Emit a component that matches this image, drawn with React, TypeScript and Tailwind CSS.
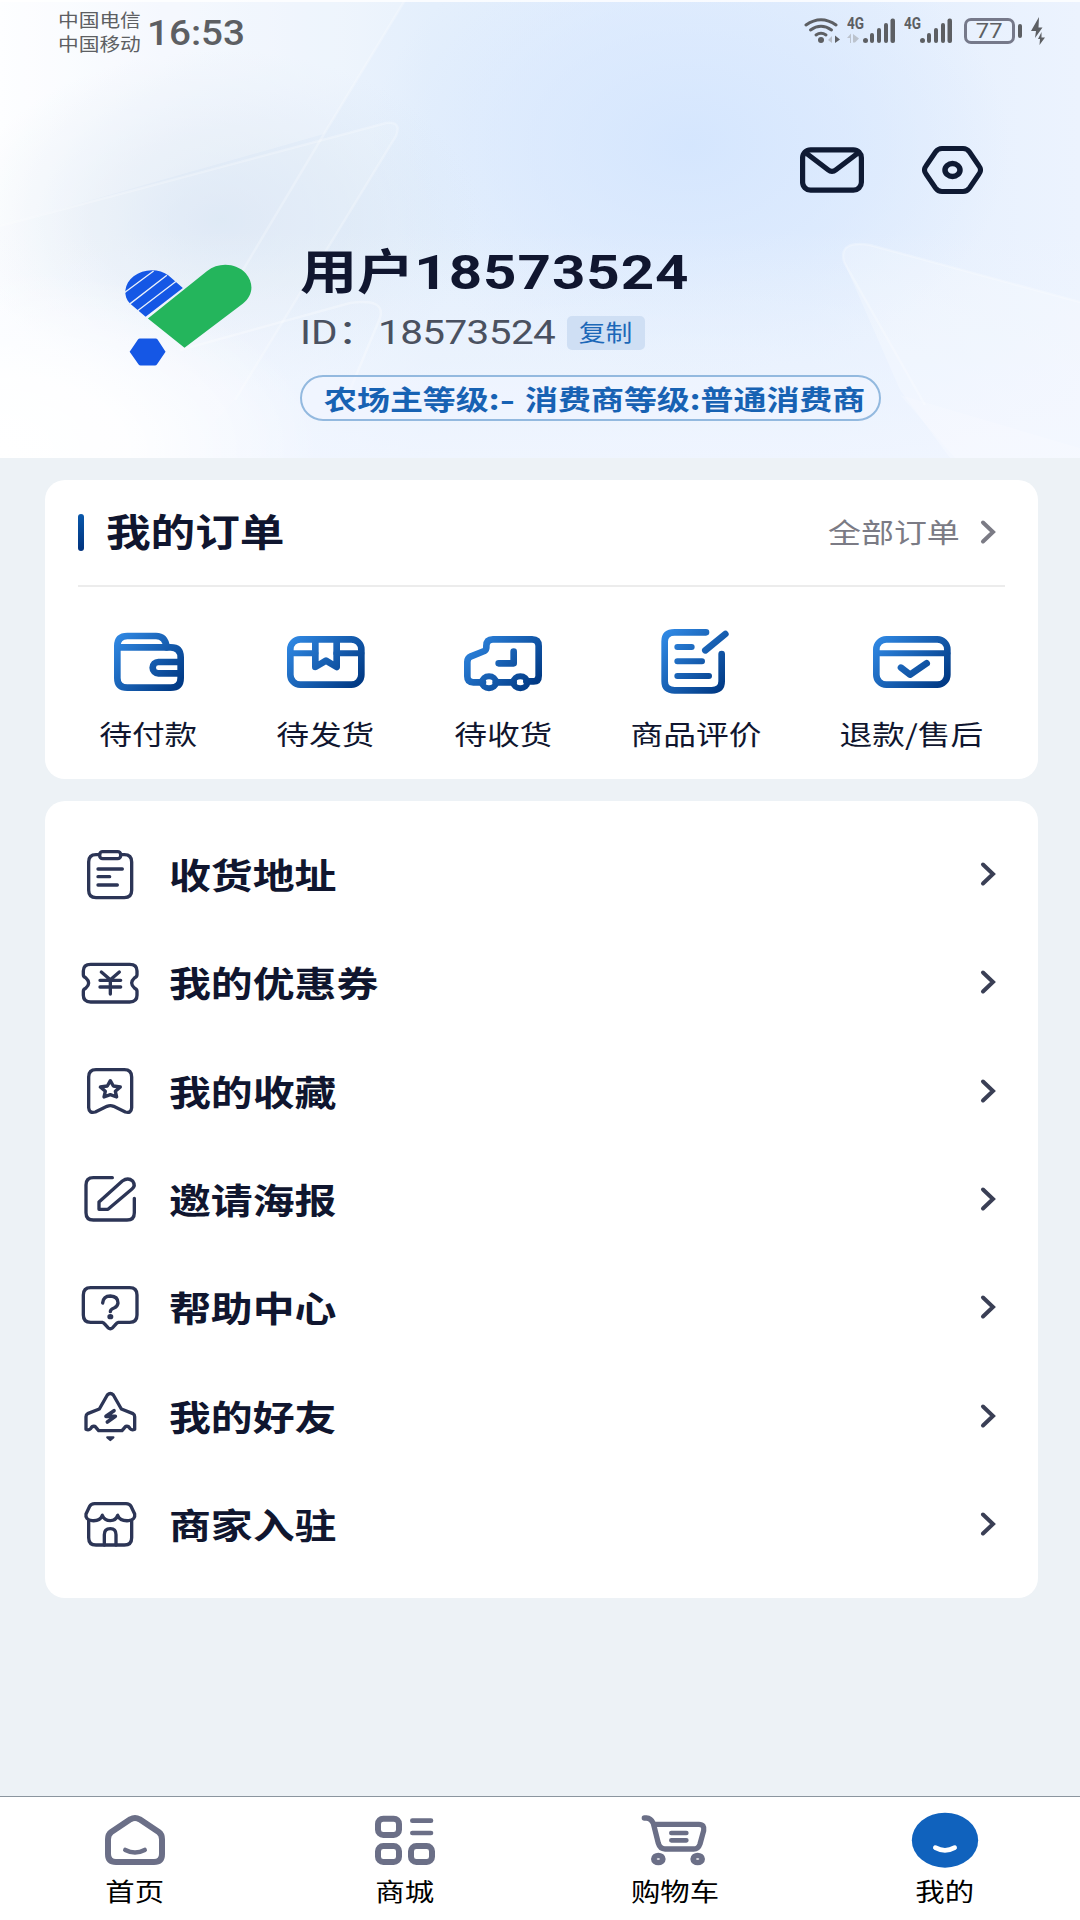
/**
 * ProfilePage — the "我的" tab of the mall app.
 *
 * Header with account info, order shortcuts, a menu list and the bottom tab
 * bar. The whole UI is drawn with wide letterforms, so text goes through
 * <Wide>, which stretches it horizontally.
 */
import type { ReactNode } from 'react'
import clsx from 'clsx'

interface WideProps {
  className?: string
  center?: boolean
  children: ReactNode
}

function Wide({ className, center = false, children }: WideProps) {
  return (
    <span
      className={clsx(
        'inline-block scale-x-[1.19] whitespace-nowrap',
        center ? 'origin-center' : 'origin-left',
        className
      )}
    >
      {children}
    </span>
  )
}

export default function App() {
  return (
    <div className="flex h-[1920px] w-[1080px] flex-col overflow-hidden bg-[#edf2f6] font-['Noto_Sans_CJK_SC',sans-serif] text-[#10162f]">
      <Header />
      <OrdersCard />
      <MenuCard />
      <TabBar />
    </div>
  )
}

/* ---------- header ---------- */

function Header() {
  return (
    <header className="relative h-[458px] shrink-0 overflow-hidden bg-[#eef5fe]">
      <HeaderBackdrop />
      <div className="relative">
        <StatusBar />

        <div className="mt-[76px] flex h-[60px] items-center justify-end gap-[58px] pr-[97px]">
          <svg width="64" height="46" viewBox="0 0 64 46" fill="none" stroke="#0f1a33" strokeWidth="5.2">
            <rect x="2.6" y="2.8" width="58.8" height="40.4" rx="8" />
            <path d="M6 6 L28 22.8 Q32 26 36 22.8 L58 6" />
          </svg>
          <svg width="61" height="48" viewBox="0 0 61 48" fill="none" stroke="#0f1a33" strokeWidth="5">
            <path d="M20 2.5 H41 Q45 2.5 47.5 6 L57 20 Q60 24 57 28 L47.5 42 Q45 45.5 41 45.5 H20 Q16 45.5 13.5 42 L4 28 Q1 24 4 20 L13.5 6 Q16 2.5 20 2.5 Z" />
            <ellipse cx="30.5" cy="24" rx="7.5" ry="6.4" strokeWidth="5.5" />
          </svg>
        </div>

        <div className="mt-10 flex pl-[122px]">
          <Logo />
          <div className="ml-[45px]">
            <div className="h-[62px] text-[48px] leading-[56px] font-bold">
              <Wide>
                用户<span className="font-['Roboto'] text-[49px] tracking-[0.8px]">18573524</span>
              </Wide>
            </div>
            <div className="mt-1.5 flex h-[50px] items-center">
              <div className="w-[267px] pb-[2px] font-['Roboto','Noto_Sans_CJK_SC',sans-serif] text-[34px] leading-[50px] text-[#4a5160]">
                <Wide>
                  ID：<span className="tracking-[-0.5px]">18573524</span>
                </Wide>
              </div>
              <button
                type="button"
                className="flex h-[34px] w-[78px] items-center justify-center rounded-[5px] bg-[#cfdff4] pb-[3px] text-[22.5px] leading-[31px] text-[#1c68b8]"
              >
                <Wide center>复制</Wide>
              </button>
            </div>
            <div className="mt-[17px] flex h-[46px] w-[581px] items-center rounded-full border-2 border-[#93b9df] bg-[#f1f6ff]/50 pl-[22px] text-[27.7px] leading-[42px] font-bold text-[#1762b3]">
              <Wide>
                农场主等级:<span className="mr-[3px] ml-[2px] inline-block scale-x-125">-</span> 消费商等级:普通消费商
              </Wide>
            </div>
          </div>
        </div>
      </div>
    </header>
  )
}

// Soft glow plus a few translucent glass triangles.
function HeaderBackdrop() {
  return (
    <svg className="absolute inset-0" width="1080" height="458" viewBox="0 0 1080 458" fill="none">
      <defs>
        <linearGradient id="base" x1="0" y1="0" x2="1080" y2="0" gradientUnits="userSpaceOnUse">
          <stop offset="0" stopColor="#fdfeff" />
          <stop offset="0.15" stopColor="#f3f7fe" />
          <stop offset="0.4" stopColor="#e4effc" />
          <stop offset="0.75" stopColor="#e3eefd" />
          <stop offset="1" stopColor="#ecf3fe" />
        </linearGradient>
        <radialGradient id="glow" cx="0" cy="0" r="1" gradientUnits="userSpaceOnUse" gradientTransform="translate(690 145) scale(320 230)">
          <stop offset="0" stopColor="#d3e5fe" stopOpacity="0.9" />
          <stop offset="0.5" stopColor="#d7e7fe" stopOpacity="0.6" />
          <stop offset="1" stopColor="#d7e7fe" stopOpacity="0" />
        </radialGradient>
        <radialGradient id="mist" cx="0" cy="0" r="1" gradientUnits="userSpaceOnUse" gradientTransform="translate(220 220) scale(260 170)">
          <stop offset="0" stopColor="#cfdff0" stopOpacity="0.65" />
          <stop offset="0.5" stopColor="#d3e1f0" stopOpacity="0.4" />
          <stop offset="1" stopColor="#d5e3f2" stopOpacity="0" />
        </radialGradient>
        <linearGradient id="fade" x1="0" y1="230" x2="0" y2="458" gradientUnits="userSpaceOnUse">
          <stop offset="0" stopColor="#f1f6ff" stopOpacity="0" />
          <stop offset="1" stopColor="#f1f6ff" stopOpacity="0.85" />
        </linearGradient>
        <radialGradient id="corner" cx="0" cy="0" r="1" gradientUnits="userSpaceOnUse" gradientTransform="translate(0 450) scale(320 180)">
          <stop offset="0" stopColor="#fff" />
          <stop offset="0.4" stopColor="#fff" stopOpacity="0.9" />
          <stop offset="1" stopColor="#fff" stopOpacity="0" />
        </radialGradient>
      </defs>
      <rect width="1080" height="458" fill="url(#base)" />
      <rect width="1080" height="458" fill="url(#glow)" />
      <rect width="1080" height="458" fill="url(#mist)" />
      <rect width="1080" height="458" fill="url(#fade)" />
      <rect width="1080" height="458" fill="url(#corner)" />
      <path d="M0 0 H405 L324 134 L0 226 Z" fill="#fff" fillOpacity="0.22" />
      <path d="M0 226 L386 123 Q402 121 396 136 L235 400 L180 458 H0 Z" fill="#fff" fillOpacity="0.12" />
      <path d="M0 226 L386 123 Q402 121 396 136 L235 400" stroke="#fff" strokeOpacity="0.25" strokeWidth="2.5" />
      <path d="M405 0 L324 134 L240 275" stroke="#fff" strokeOpacity="0.25" strokeWidth="2.5" />
      <path d="M180 350 L350 303 Q386 298 380 318 L350 390" stroke="#fff" strokeOpacity="0.3" strokeWidth="2.5" />
      <path d="M1080 302 L870 245 Q838 240 844 262 L900 390 L950 458 H1080 Z" fill="#fff" fillOpacity="0.24" />
      <path d="M1080 302 L870 245 Q838 240 844 262 L925 405" stroke="#fff" strokeOpacity="0.25" strokeWidth="2.5" />
      <path d="M900 395 L1080 448 V458 H955 Z" fill="#fff" fillOpacity="0.18" />
      <rect width="1080" height="2" fill="#fff" fillOpacity="0.8" />
    </svg>
  )
}

function StatusBar() {
  return (
    <div className="flex h-16 items-center text-[#5d5f63]">
      <div className="ml-[58px] w-[89px] pb-[3px] text-[18px] leading-[24px]">
        <div>
          <span className="inline-block origin-left scale-x-[1.15]">中国电信</span>
        </div>
        <div>
          <span className="inline-block origin-left scale-x-[1.15]">中国移动</span>
        </div>
      </div>
      <span className="inline-block origin-left scale-x-[1.12] pt-[2px] font-['Roboto'] text-[34.5px] leading-[62px] font-medium">
        16:53
      </span>

      <div className="mr-[35px] mb-[3px] ml-auto flex items-center">
        <svg width="38" height="26" viewBox="0 0 38 26" fill="none" stroke="currentColor" strokeWidth="3" strokeLinecap="round">
          <path d="M2 7 Q17 -3.5 32 7" />
          <path d="M6.5 12 Q17 4.5 27.5 12" />
          <path d="M12 17 Q17 13.5 22 17" />
          <circle cx="17" cy="22" r="3" fill="currentColor" stroke="none" />
          <path d="M28 18 V25 L24 22 Z" fill="#b9bfc9" stroke="none" />
          <path d="M31 17.5 V25 L36 21.5 Z" fill="currentColor" stroke="none" />
        </svg>
        <Signal dataArrows />
        <Signal />
        <div className="ml-3 flex h-[26px] w-[51px] items-center justify-center rounded-[7px] border-[3px] border-[#76798a] font-['Roboto'] text-[20px] leading-[20px]">
          <Wide center>77</Wide>
        </div>
        <div className="ml-[3px] h-[14px] w-1 rounded-full bg-current" />
        <svg className="ml-[9px]" width="14" height="28" viewBox="0 0 14 28" fill="currentColor">
          <path d="M8 0 L0 14 H5 L4 21 L11.5 10.5 H7.5 Z" />
          <path d="M10.5 15 L7 22 H9 L8.5 28 L14 20.5 H10.5 Z" />
        </svg>
      </div>
    </div>
  )
}

function Signal({ dataArrows = false }: { dataArrows?: boolean }) {
  return (
    <div className="relative ml-[9px] h-[26px] w-[48px] first-of-type:ml-[5px]">
      <span className="absolute -top-[1px] left-0 origin-left scale-x-[0.85] font-['Roboto'] text-[16px] leading-[14px] font-bold">
        4G
      </span>
      <svg width="48" height="26" viewBox="0 0 48 26" fill="currentColor">
        {dataArrows && <path d="M0 20 L4 15.5 V25 H3 V20 Z M6 16 L12 20.5 L8 24.5 H6 Z" fill="#bcc3cd" />}
        <circle cx="18.5" cy="22.5" r="2.5" />
        <rect x="23" y="15" width="4" height="10" rx="2" />
        <rect x="30" y="10" width="4" height="15" rx="2" />
        <rect x="37" y="5" width="4" height="20" rx="2" />
        <rect x="43.5" y="0.5" width="4.5" height="24.5" rx="2" />
      </svg>
    </div>
  )
}

function Logo() {
  return (
    <svg className="mt-[22px]" width="133" height="107" viewBox="0 0 400 320">
      <path d="M183 77 L71 164 L24 124 C2 102 6 64 35 42 C65 18 112 18 140 40 Z" fill="#1557e5" />
      <path d="M8 91 L95 26 M20 128 L135 39 M45 147 L162 58" stroke="#eaf1fb" strokeWidth="4" />
      <path d="M78 169 L256 26 C290 -2 345 2 372 33 C398 64 394 100 364 124 L188 257 Z" fill="#24b55c" />
      <path d="M23 269 L48 232 Q50 229 54 229 H101 Q105 229 107 232 L131 269 L105 307 Q103 310 99 310 H56 Q52 310 50 307 Z" fill="#1557e5" />
    </svg>
  )
}

/* ---------- orders ---------- */

interface OrderItem {
  label: string
  width: string
  icon: ReactNode
}

const ORDER_ITEMS: OrderItem[] = [
  {
    label: '待付款',
    width: 'w-[98px]',
    icon: (
      <>
        <path d="M49 80 V72 Q49 42 79 42 H165 Q193 42 197 76" />
        <path d="M49 76 H209 Q239 76 239 106 V168 Q239 197 209 197 H79 Q49 197 49 168 Z" />
        <path d="M239 120 H172 a17 17 0 0 0 0 34 H239" />
      </>
    )
  },
  {
    label: '待发货',
    width: 'w-[98px]',
    icon: (
      <>
        <rect x="37" y="52" width="213" height="136" rx="30" />
        <path d="M37 94 H112 M175 94 H250" strokeWidth="18" />
        <path d="M112 52 V135 L144 116 L176 135 V52" />
      </>
    )
  },
  {
    label: '待收货',
    width: 'w-[98px]',
    icon: (
      <>
        <path d="M84 181 H55 Q37 181 37 163 V120 Q37 108 48 103 L88 87 Q94 84 94 76 V72 Q94 52 114 52 H231 Q251 52 251 72 V161 Q251 178 236 178 H214" />
        <path d="M122 181 H176" />
        <ellipse cx="102" cy="181" rx="21" ry="18" strokeWidth="18" />
        <ellipse cx="196" cy="181" rx="21" ry="18" strokeWidth="18" />
        <path d="M176 89 V124 H131" />
      </>
    )
  },
  {
    label: '商品评价',
    width: 'w-[130px]',
    icon: (
      <>
        <path d="M174 31 H80 Q50 31 50 58 V178 Q50 205 80 205 H191 Q221 205 221 178 V96" />
        <path d="M232 36 L172 85" />
        <path d="M88 75 H131 M88 118 H162 M88 162 H183" strokeWidth="18" />
      </>
    )
  },
  {
    label: '退款/售后',
    width: 'w-[143px]',
    icon: (
      <>
        <rect x="37" y="52" width="213" height="136" rx="30" />
        <path d="M37 94 H250" strokeWidth="18" />
        <path d="M111 137 L138 158 L188 124" />
      </>
    )
  }
]

function OrdersCard() {
  return (
    <section className="mx-[45px] mt-[22px] h-[299px] w-[993px] shrink-0 rounded-[20px] bg-white">
      <div className="mx-[33px] flex h-[107px] items-center border-b-2 border-[#ececec]">
        <div className="h-[37px] w-1.5 rounded-full bg-linear-to-b from-[#0a58ab] to-[#02327d]" />
        <h2 className="ml-[22px] pb-[5px] text-[37.5px] leading-[56px] font-bold">
          <Wide>我的订单</Wide>
        </h2>
        <div className="ml-auto w-[152px] pb-[3px] text-[27.7px] leading-[42px] text-[#7b7b85]">
          <Wide>全部订单</Wide>
        </div>
        <Chevron className="mr-[9px] mb-px text-[#7b7b85]" />
      </div>

      <div className="flex gap-[79.2px] pt-[35px] pl-[54.5px]">
        {ORDER_ITEMS.map((item) => (
          <div key={item.label} className={clsx('flex flex-col items-center', item.width)}>
            <svg width="96" height="80" viewBox="0 0 288 240" fill="none" stroke="url(#order-blue)" strokeWidth="20" strokeLinecap="round" strokeLinejoin="round">
              <defs>
                <linearGradient id="order-blue" x1="50" y1="40" x2="220" y2="205" gradientUnits="userSpaceOnUse">
                  <stop offset="0" stopColor="#2f87e2" />
                  <stop offset="1" stopColor="#013a85" />
                </linearGradient>
              </defs>
              {item.icon}
            </svg>
            <div className="mt-[11px] text-[27.5px] leading-[40px]">
              <Wide center>{item.label}</Wide>
            </div>
          </div>
        ))}
      </div>
    </section>
  )
}

function Chevron({ className }: { className?: string }) {
  return (
    <svg className={className} width="16" height="26" viewBox="0 0 16 26" fill="none" stroke="currentColor" strokeWidth="4" strokeLinecap="round">
      <path d="M3 3.5 L13 13 L3 22.5" />
    </svg>
  )
}

/* ---------- menu ---------- */

const MENU_ITEMS: { label: string; icon: ReactNode }[] = [
  {
    label: '收货地址',
    icon: (
      <>
        <path d="M65 32 H54 Q32 32 32 54 V139 Q32 161 54 161 H139 Q161 161 161 139 V54 Q161 32 139 32 H128" />
        <rect x="65" y="23" width="63" height="21" rx="9" />
        <path d="M60 75 H133 M60 98 H95 M60 123 H118" />
      </>
    )
  },
  {
    label: '我的优惠券',
    icon: (
      <>
        <path d="M38 37 H155 Q177 37 177 57 V68 Q177 74 170 77 Q152 93 170 109 Q177 112 177 118 V130 Q177 150 155 150 H38 Q16 150 16 130 V118 Q16 112 23 109 Q41 93 23 77 Q16 74 16 68 V57 Q16 37 38 37 Z" />
        <path d="M70 60 L97 83 L124 60 M66 85 H128 M66 105 H128 M97 83 V126" />
      </>
    )
  },
  {
    label: '我的收藏',
    icon: (
      <>
        <path d="M54 26 H139 Q161 26 161 48 V140 Q160 158 142 153 L107 136 Q97 132 87 136 L52 153 Q33 158 32 140 V48 Q32 26 54 26 Z" />
        <path d="M97 59 L106 75 L127 78 L112 91 L116 108 L97 101 L78 108 L82 91 L67 78 L88 75 Z" />
      </>
    )
  },
  {
    label: '邀请海报',
    icon: (
      <>
        <path d="M103 26 H46 Q24 26 24 48 V131 Q24 153 46 153 H147 Q169 153 169 131 V88" />
        <path d="M63 121 V99 L133 36 Q150 24 164 36 Q174 50 162 60 L90 121 Z" />
      </>
    )
  },
  {
    label: '帮助中心',
    icon: (
      <>
        <path d="M38 32 H155 Q177 32 177 54 V114 Q177 136 155 136 H121 Q116 137 113 142 L104 152 Q97 158 90 152 L81 142 Q78 137 73 136 H38 Q16 136 16 114 V54 Q16 32 38 32 Z" />
        <path d="M74 78 Q76 57 97 57 Q120 58 120 78 Q119 88 108 93 Q97 97 97 104" />
        <ellipse cx="97" cy="119" rx="4" ry="3" fill="currentColor" />
      </>
    )
  },
  {
    label: '我的好友',
    icon: (
      <>
        <path d="M88 27 Q97 18 106 27 L130 69 L165 83 Q170 86 170 92 V130 Q162 134 156 128 Q152 119 143 121 L132 134 H62 L51 121 Q42 119 38 128 Q32 134 24 130 V92 Q24 86 29 83 L64 69 Z" />
        <path d="M108 74 L84 91 H112 L88 108" strokeWidth="11" />
        <path d="M88 154 H106 L97 162 Z" fill="currentColor" strokeWidth="7" />
      </>
    )
  },
  {
    label: '商家入驻',
    icon: (
      <>
        <path d="M50 29 H144 Q155 29 159 37 L170 60 Q173 77 152 80 Q126 82 119 64 Q114 80 97 80 Q80 80 73 64 Q66 82 42 80 Q21 77 24 60 L35 37 Q39 29 50 29 Z" />
        <path d="M32 79 V131 Q32 153 54 153 H139 Q161 153 161 131 V79" />
        <path d="M79 153 V122 Q79 104 97 104 Q114 104 114 122 V153" />
      </>
    )
  }
]

function MenuCard() {
  return (
    <section className="mx-[45px] mt-[22px] h-[797px] w-[993px] shrink-0 rounded-[20px] bg-white pt-[21px]">
      {MENU_ITEMS.map((item) => (
        <div key={item.label} className="flex h-[108.33px] items-center pr-[42px] pl-[32.5px]">
          <svg className="text-[#2c3556]" width="64" height="64" viewBox="0 0 192 192" fill="none" stroke="currentColor" strokeWidth="10" strokeLinecap="round" strokeLinejoin="round">
            {item.icon}
          </svg>
          <div className="ml-[27px] pb-[4px] text-[35.2px] leading-[52px] font-bold">
            <Wide>{item.label}</Wide>
          </div>
          <Chevron className="mb-[4px] ml-auto text-[#3a3f55]" />
        </div>
      ))}
    </section>
  )
}

/* ---------- tab bar ---------- */

const TABS: { label: string; icon: ReactNode }[] = [
  {
    label: '首页',
    icon: (
      <>
        <path d="M63 94 Q63 79 73 72 L130 34 Q144 26 158 34 L215 72 Q225 79 225 94 V138 Q225 162 201 162 H87 Q63 162 63 138 Z" />
        <path d="M115 126 Q144 141 173 126" strokeWidth="14" />
      </>
    )
  },
  {
    label: '商城',
    icon: (
      <>
        <rect x="63" y="32" width="63" height="49" rx="16" />
        <rect x="63" y="114" width="63" height="48" rx="16" />
        <rect x="162" y="114" width="63" height="48" rx="16" />
        <path d="M166 38 H222 M166 75 H222" strokeWidth="14" />
      </>
    )
  },
  {
    label: '购物车',
    icon: (
      <>
        <path d="M52 30 H58 Q72 31 79 46 L94 106 Q99 123 114 123 H200 Q214 123 219 108 L230 68 Q233 49 216 49 H82" strokeWidth="16" />
        <path d="M133 75 H178 M133 97 H178" strokeWidth="14" />
        <ellipse cx="94" cy="153" rx="13.5" ry="10.5" strokeWidth="17" />
        <ellipse cx="212" cy="153" rx="13.5" ry="10.5" strokeWidth="17" />
      </>
    )
  },
  {
    label: '我的',
    icon: (
      <>
        <ellipse cx="144" cy="96.5" rx="99.5" ry="82.5" fill="#1062bd" stroke="none" />
        <path d="M115 119 Q144 135 173 119" stroke="#fff" strokeWidth="14" />
      </>
    )
  }
]

function TabBar() {
  return (
    <nav className="mt-auto flex h-[124px] shrink-0 border-t border-[#8b959e] bg-white">
      {TABS.map((tab) => (
        <div key={tab.label} className="flex flex-1 flex-col items-center pt-[11px]">
          <svg width="96" height="64" viewBox="0 0 288 192" fill="none" stroke="#6b6f87" strokeWidth="18" strokeLinecap="round" strokeLinejoin="round">
            {tab.icon}
          </svg>
          <div className="text-[24.7px] leading-[36px] text-black">
            <Wide center>{tab.label}</Wide>
          </div>
        </div>
      ))}
    </nav>
  )
}
